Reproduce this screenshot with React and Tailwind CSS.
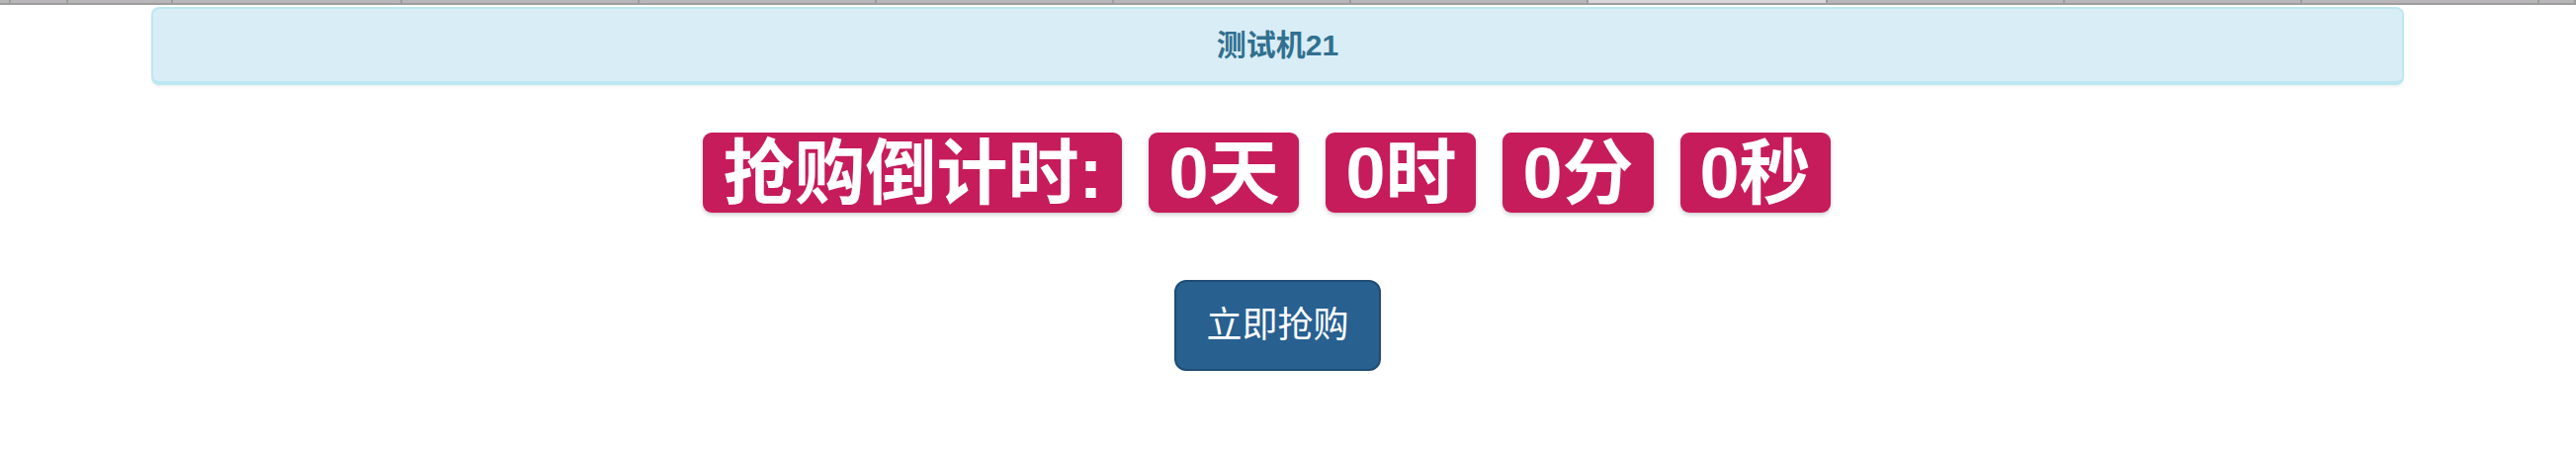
import React from 'react';

const tabs = [11, 58, 106, 232, 240, 240, 240, 240, 240, 242, 240, 240, 240, 37];

const CountBox = ({ children }) => (
  <div className="flex h-[81px] items-center rounded-[9px] bg-[#c71c5b] px-5 text-[72px] font-bold leading-none text-white shadow-[0_2px_4px_rgba(0,0,0,0.2)]">
    {children}
  </div>
);

const App = () => {
  return (
    <div className="min-h-screen bg-white font-['Liberation_Sans','Noto_Sans_CJK_SC',sans-serif]">
      {/* browser tab strip cut off at the top */}
      <div className="flex h-[5px] border-b-2 border-[#9d9d9d] bg-[#b8b6b8]">
        {tabs.map((w, i) => (
          <div
            key={i}
            style={{ width: w }}
            className={`shrink-0 border-r-2 border-[#9d9d9d] ${i === 9 ? 'bg-[#d8d6d8]' : ''}`}
          />
        ))}
      </div>

      <div className="ml-[153px] mr-[174px] mt-[2px]">
        <div className="flex h-[79px] items-center justify-center rounded-lg border-2 border-b-4 border-[#bce8f1] bg-[#d9edf7] text-[30px] font-bold text-[#31708f] shadow-[0_2px_3px_rgba(0,0,0,0.06)]">
          测试机21
        </div>

        <div className="mt-[48px] flex justify-center gap-[27px] pr-[22px]">
          <CountBox>抢购倒计时:</CountBox>
          <CountBox>0天</CountBox>
          <CountBox>0时</CountBox>
          <CountBox>0分</CountBox>
          <CountBox>0秒</CountBox>
        </div>

        <div className="mt-[68px] flex justify-center">
          <button className="rounded-[12px] border-2 border-[#204d74] bg-[#286090] px-[30px] py-[20px] text-[36px] leading-[48px] text-white">
            立即抢购
          </button>
        </div>
      </div>
    </div>
  );
};

export default App;
